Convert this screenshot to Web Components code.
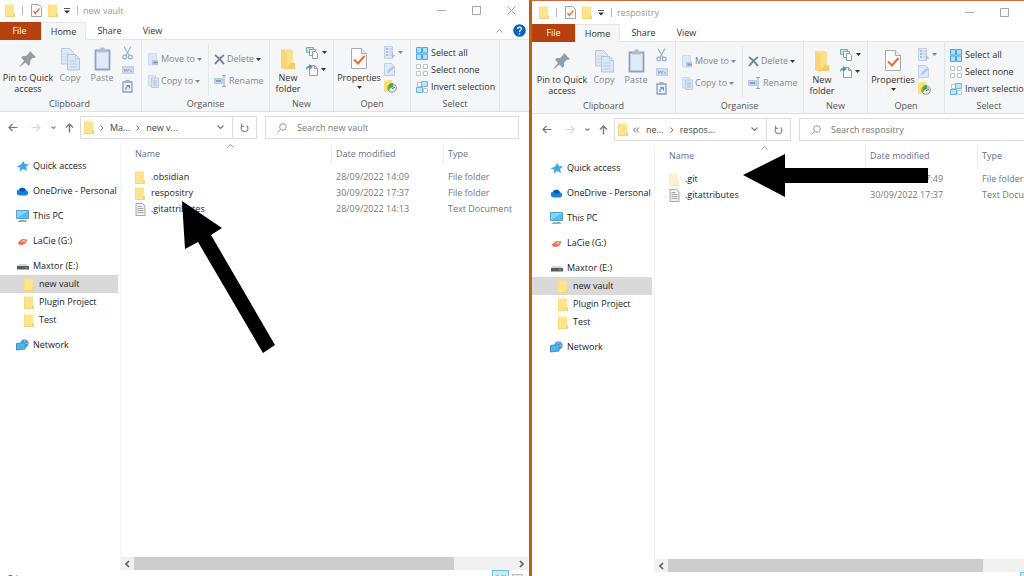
<!DOCTYPE html>
<html lang="en">
<head>
<meta charset="utf-8">
<title>File Explorer</title>
<style>
  html, body { margin: 0; height: 100%; }
  body { overflow: hidden; background: #fff; font: 9px/12px "Open Sans", "Noto Sans", sans-serif; color: #222; }
</style>
</head>
<body>
<desk-top>
  <explorer-window class="first" caption="new vault" crumbs="Ma...|new v..." rows='[["folder",".obsidian","28/09/2022 14:09","File folder"],["folder","respositry","30/09/2022 17:37","File folder"],["doc",".gitattributes","28/09/2022 14:13","Text Document"]]'></explorer-window>
  <explorer-window class="second" caption="respositry" crumbs="ne...|respos..." nested rows='[["faded",".git","30/09/2022 17:49","File folder"],["doc",".gitattributes","30/09/2022 17:37","Text Document"]]'></explorer-window>
</desk-top>
<script>
const folderArt = (a, b, c) => `<path d="M0 .5h9v8.500l1 1V13H0z" fill="${a}"/><path d="M0 .5h1V13H0z" fill="${b}"/><path d="M8 9h1l1 1v3H0v-1h8z" fill="${c}"/>`;
const ICONS = {
  folder: [10, 13, folderArt('#ffe490', '#fbdc7c', '#f5d571')],
  faded: [10, 13, folderArt('#fff1cb', '#feedbf', '#fbe9b8')],
  bigfolder: [16, 22, '<path d="M1 1h11l1 2v14l2 2v2H1z" fill="#fde08c"/><path d="M1 1l6 4v17l-6-2z" fill="#fbd677"/><path d="M11 15h4v6H7v-2z" fill="#f3cd69"/>'],
  doc: [11, 13, '<path d="M1 .5h6.500L10 3v9.500H1z" fill="#f2f2f2" stroke="#a8a8a8"/><path d="M2.500 3.500h4M2.500 5.500h6M2.500 7.500h6M2.500 9.500h6" stroke="#a5a5a5"/>'],
  check: [11, 13, '<path d="M.5.5h7L10.500 3.500v9H.5z" fill="#fff" stroke="#a2a2a2"/><path d="M2.500 7l2 2.500 4-5" fill="none" stroke="#ec7448" stroke-width="1.500"/>'],
  props: [18, 23, '<path d="M1.500 1.500h10l5 5v15h-15z" fill="#fff" stroke="#aaa"/><path d="M11.500 1.500v5h5" fill="#eee" stroke="#aaa"/><path d="M4 12.500l4 4 6.500-7.500" fill="none" stroke="#f0692c" stroke-width="2.200"/>'],
  pin: [18, 18, '<path d="M11 1l6 6-2 1-1-.3-3 3 .3 3L9.500 16 6.500 12.500 1 17l-.5-.5L5 11 2 7.500l2-1.500h3l3-3z" fill="#939da3"/>'],
  copy: [20, 24, '<path d="M1.500 1.500h8l4 4V17h-12z" fill="#dfe8f5" stroke="#b9c8e1"/><path d="M3 7h6M3 10h6M3 13h6" stroke="#c4d3ea"/><path d="M7.500 7.500h8l4 4V23h-12z" fill="#dce7f6" stroke="#b1c3df"/><path d="M15.500 7.500v4h4M9.500 14h7M9.500 17h7M9.500 20h7" fill="none" stroke="#b7c9e5"/>'],
  paste: [17, 24, '<path d="M1.500 3.500h14v19h-14z" fill="#e0ebfa" stroke="#8fa2c3" stroke-width="1.800"/><path d="M4 2.500h2.500v-2h4v2H13v3H4z" fill="#afbdd4"/>'],
  cut: [11, 14, '<path d="M2 .5l5 9M9 .5l-5 9" stroke="#a9b5c8" stroke-width="1.200"/><circle cx="2.700" cy="11" r="1.900" fill="none" stroke="#96abcd" stroke-width="1.200"/><circle cx="8.300" cy="11" r="1.900" fill="none" stroke="#96abcd" stroke-width="1.200"/>'],
  path: [12, 8, '<rect x=".5" y=".5" width="11" height="7" fill="#ccdaf0" stroke="#c2d1e8"/><path d="M2 3l1 2.500L4.500 3l1 2.500L7 3M8 5h2" stroke="#8aa2c8" fill="none"/>'],
  shortcut: [11, 13, '<path d="M1 2h9v10H1z" fill="#e6eefa" stroke="#8a9fc3" stroke-width="1.300"/><path d="M3.500 0h4v2.500h-4z" fill="#9dafcc"/><path d="M4 10V7.500L7 6M4.500 5.500H7.500V8.500" stroke="#6681b4" fill="none"/>'],
  move: [11, 13, '<path d="M.5.5h8V12h-8z" fill="#dfe8f6" stroke="#d0dcee"/><path d="M4 7h6v5H4z" fill="#b4c6e4"/><path d="M10 9.500H6M7.500 8L6 9.500 7.500 11" stroke="#7f99c8" fill="none"/>'],
  copyto: [11, 13, '<path d="M.5.5h7V11h-7z" fill="#dfe8f6" stroke="#cdd9ed"/><path d="M3.500 3h7v9.500h-7z" fill="#d9e4f5" stroke="#bccbe4"/><path d="M5 6h4M5 8h4M5 10h4" stroke="#abc0e1"/>'],
  del: [11, 11, '<path d="M1 1c3 2 6 5 9 9M10 1C7 3 4 6 1 10" stroke="#70849f" stroke-width="2" fill="none"/>'],
  rename: [13, 12, '<path d="M.5 3.500h8v5h-8z" fill="#c3d3ec" stroke="#b5c8e5"/><path d="M2 6h5" stroke="#86a0c9" stroke-width="2"/><path d="M8 .5h4M10 .5v11M8 11.500h4" stroke="#93a7c8"/>'],
  newitem: [13, 13, '<path d="M.5 1.500h7v5h-7z" fill="#bfe4ea" stroke="#7aacb9"/><path d="M3.500 3.500h6v6h-6z" fill="#f4f6f8" stroke="#8f9ca3"/><path d="M6.500 5.500h3l2 2v5h-5z" fill="#fff" stroke="#929ca3"/>'],
  easy: [12, 13, '<path d="M3.500 2.500h5l3 3v7h-8z" fill="#fff" stroke="#989c9f"/><path d="M8.500 2.500v3h3" fill="none" stroke="#989c9f"/><path d="M0 7c0-3 1-4 3-4V1l4 3-4 3V5C2 5 1 5.500 0 7z" fill="#459bc5"/>'],
  open: [11, 13, '<path d="M.5.5h8v12h-8z" fill="#e0e9f6" stroke="#c2cfe4"/><path d="M2 3h2M2 6h2M2 9h2" stroke="#98aed6" stroke-width="1.500"/><path d="M5 3h3M5 6h3M5 9h3" stroke="#b6c6e1"/><path d="M8 7l3 3-3 2z" fill="#a2bbe0"/>'],
  edit: [11, 13, '<path d="M.5.5h7l3 3v9H.5z" fill="#dde8f8" stroke="#c0cfe6"/><path d="M3 10l1-3 5-4 1.500 1.500L5 9.500z" fill="#b0c6e6"/>'],
  history: [13, 13, '<path d="M0 1l5-1h3v12H0z" fill="#ffe070"/><circle cx="8" cy="8" r="4.300" fill="#e8ebe9" stroke="#8b9890"/><path d="M9 3.500C6 2.500 3.500 5 4.500 11l2-3 3-1z" fill="#43ad48"/><path d="M8 9l3-2" stroke="#66706a"/>'],
  all: [12, 13, '<path d="M.5.5h5v5.500h-5zM6.500.5h5v5.500h-5zM.5 7h5v5.500h-5zM6.500 7h5v5.500h-5z" fill="#b2e0fb" stroke="#48a7e4"/>'],
  none: [12, 12, '<path d="M.5.5h4v4h-4zM7.500.5h4v4h-4zM.5 7.500h4v4h-4zM7.500 7.500h4v4h-4z" fill="#fff" stroke="#c0c2c4"/>'],
  invert: [12, 12, '<path d="M1.500 1.500h4v4h-4zM7.500 7.500h4v4h-4z" fill="#fff" stroke="#c0c2c4"/><path d="M5.500.5h6v5h-6zM.5 6.500h6v5h-6z" fill="#bfe4fb" stroke="#66b6e8"/>'],
  down: [5, 3, '<path d="M0 0h5L2.500 3z" fill="currentColor"/>'],
  quick: [6, 6, '<path d="M0 .5h6" stroke="#555"/><path d="M0 2.500h6L3 5.500z" fill="#333"/>'],
  min: [9, 9, '<path d="M0 4.500h9" stroke="#aaa"/>'],
  max: [9, 9, '<path d="M.5.5h8v8h-8z" fill="none" stroke="#a6a6a6"/>'],
  close: [9, 9, '<path d="M.5.5l8 8M8.500.5l-8 8" stroke="#a0a0a0"/>'],
  up: [7, 4, '<path d="M.5 3.500l3-3 3 3" fill="none" stroke="#999"/>'],
  help: [13, 13, '<circle cx="6.500" cy="6.500" r="6.300" fill="#0b63b8"/><path d="M4.700 5c0-2.600 3.800-2.400 3.700-.1C8.400 6.400 6.500 6.300 6.500 8M6.500 9v1.500" stroke="#fff" stroke-width="1.300" fill="none"/>'],
  back: [10, 9, '<path d="M9.500 4.500H1M4.500 1L1 4.500 4.500 8" fill="none" stroke="#777" stroke-width="1.200"/>'],
  fwd: [10, 9, '<path d="M.5 4.500H9M5.500 1L9 4.500 5.500 8" fill="none" stroke="#d8d8d8" stroke-width="1.200"/>'],
  upward: [9, 10, '<path d="M4.500 9.500V1M1 4.500L4.500 1 8 4.500" fill="none" stroke="#777" stroke-width="1.400"/>'],
  chev: [7, 5, '<path d="M.5.5l3 3 3-3" fill="none" stroke="#777" stroke-width="1.200"/>'],
  recent: [5, 4, '<path d="M.5.5l2 2 2-2" fill="none" stroke="#888" stroke-width="1.200"/>'],
  sep: [4, 6, '<path d="M.5.5L3 3 .5 5.500" fill="none" stroke="#777"/>'],
  dsep: [7, 6, '<path d="M3 .5L.5 3 3 5.500M6 .5L3.500 3 6 5.500" fill="none" stroke="#666"/>'],
  refresh: [9, 10, '<path d="M2.300 2.800A3.400 3.400 0 1 0 6.500 2.600M1.500.8v2.500h2.500" fill="none" stroke="#888" stroke-width="1.200"/>'],
  lens: [10, 10, '<circle cx="6" cy="4" r="3.300" fill="none" stroke="#999"/><path d="M3.500 6.500L.5 9.500" stroke="#999"/>'],
  star: [13, 12, '<path d="M7.500 1L9 4.200l4-.2-3 3 1 4-3.700-2L3.500 11.500l.8-3.700L.5 6.500l4.200-1.800z" fill="#3ca8ea"/>'],
  cloud: [13, 9, '<path d="M3.500 8.500a3 3 0 0 1-.5-5.900A4 4 0 0 1 10 3.300a2.700 2.700 0 0 1 .3 5.200z" fill="#1681d8"/><path d="M3 2.600A4 4 0 0 1 10 3.300L6 5z" fill="#0a56ad"/>'],
  pc: [13, 12, '<path d="M.5.5h12v8H.5z" fill="#4fc0f3" stroke="#5f9fc2"/><path d="M1 1h11L1 8z" fill="#83d8fa"/><path d="M3 10.500h7M2 11.500h9" stroke="#8cb1c6"/>'],
  lacie: [13, 9, '<path d="M2 5.500l4-3.500 5.500.5L10 6 6.500 8 2.500 7.500z" fill="#e5744e"/><path d="M5 4.800l2-1.500 3 .5L8.500 5.300z" fill="#f9d3c2"/>'],
  drive: [13, 7, '<path d="M3 1h7l3 2.500H1z" fill="#d3d5d6"/><path d="M1 3h12v3.500H1z" fill="#565c5e"/><path d="M9 4.800h2" stroke="#47d368"/>'],
  net: [13, 12, '<circle cx="8.500" cy="4.500" r="4.200" fill="#5a9fc8"/><path d="M5 4.500h7M8.500.5v8" stroke="#8ac6e4"/><path d="M.5 4.500L9 3.500v6.500l-8.500 1z" fill="#47b8ef" stroke="#4795c2"/>'],
  left: [5, 8, '<path d="M4 1L1 4l3 3" fill="none" stroke="#606060" stroke-width="1.700"/>'],
  right: [5, 8, '<path d="M1 1l3 3-3 3" fill="none" stroke="#606060" stroke-width="1.700"/>'],
  details: [12, 9, '<path d="M1 2h3M6 2h5M1 4.500h3M6 4.500h5M1 7h3M6 7h5" stroke="#7e949e"/>'],
  thumbs: [11, 9, '<path d="M.5.5h10v8H.5z" fill="#dfe9f6" stroke="#b9bdc1"/><path d="M2 2.500h7v4H2z" fill="#6d9ade"/>']
};

class UiIcon extends HTMLElement {
  connectedCallback() {
    if (this.shadowRoot) return;
    const [w, h, art] = ICONS[this.getAttribute('name')];
    this.attachShadow({ mode: 'open' }).innerHTML =
      `<style>:host{display:block;flex:none;width:${w}px;height:${h}px}svg{display:block}</style>
       <svg width="${w}" height="${h}" viewBox="0 0 ${w} ${h}" aria-hidden="true">${art}</svg>`;
  }
}
customElements.define('ui-icon', UiIcon);
const icon = n => `<ui-icon name="${n}"></ui-icon>`;
const RESET = `:host,*{box-sizing:border-box}button{margin:0;padding:0;border:0;background:none;font:inherit;color:inherit;display:flex;align-items:center}`;

class DeskTop extends HTMLElement {
  constructor() {
    super();
    this.attachShadow({ mode: 'open' }).innerHTML = `<style>
      :host{display:grid;grid-template-columns:minmax(0,529fr) minmax(0,495fr);height:100vh;overflow:hidden;position:relative}
      ::slotted(explorer-window){min-width:0}
      ::slotted(.first){--pull:-1px 0 0 -2px}
      ::slotted(.second){--pull:0;--inner-min:525px;border-left:3px solid #bd620f;border-top:1px solid #cb6b42}
    </style><slot></slot>
    <pointer-arrow points="182,201 222,228 211,235 275,345 263,353 198,242 185,249"></pointer-arrow>
    <pointer-arrow points="743,175 785,154 785,168 928,168 928,183 785,183 785,197"></pointer-arrow>`;
  }
}

class PointerArrow extends HTMLElement {
  connectedCallback() {
    if (this.shadowRoot) return;
    this.attachShadow({ mode: 'open' }).innerHTML = `<style>:host{position:absolute;inset:0;pointer-events:none}svg{display:block;overflow:visible}</style>
      <svg width="1" height="1" aria-hidden="true"><polygon points="${this.getAttribute('points')}"/></svg>`;
  }
}
customElements.define('pointer-arrow', PointerArrow);

class TitleBar extends HTMLElement {
  connectedCallback() {
    if (this.shadowRoot) return;
    this.attachShadow({ mode: 'open' }).innerHTML = `<style>${RESET}
      :host{display:flex;align-items:center;height:23px;padding-left:7px;color:#999}
      i{width:1px;height:9px;background:#bbb;margin:0 8px 0 7px}
      i+h1{margin-left:-3px}
      .b{margin-right:6px}
      h1{font:inherit;margin:0;flex:1}
      .w{width:35px;height:22px;justify-content:center}
    </style>${icon('folder')}<i></i><button class="b" aria-label="Properties">${icon('check')}</button>
    <button class="b" aria-label="New folder">${icon('folder')}</button><button aria-label="Customise toolbar">${icon('quick')}</button><i></i>
    <h1>${this.getAttribute('caption')}</h1>
    <button class="w" aria-label="Minimise">${icon('min')}</button><button class="w" aria-label="Maximise">${icon('max')}</button><button class="w" aria-label="Close">${icon('close')}</button>`;
  }
}
customElements.define('title-bar', TitleBar);

class RibbonTabs extends HTMLElement {
  constructor() {
    super();
    this.attachShadow({ mode: 'open' }).innerHTML = `<style>${RESET}
      :host{display:flex;height:18px;color:#333;border-bottom:1px solid #e4e5e6}
      button{height:18px;width:43px;justify-content:center}
      .file{background:#b7410e;color:#fff}
      .home{width:45px;margin-right:2px;background:#f5f6f7;border:1px solid #e4e5e6;border-bottom:0}
      .end{margin-left:auto;display:flex;align-items:center;gap:10px;padding-right:3px}
      .end button{width:auto}
    </style><button class="file">File</button><button class="home">Home</button><button>Share</button><button>View</button>
    <div class="end"><button aria-label="Collapse ribbon">${icon('up')}</button><button aria-label="Help">${icon('help')}</button></div>`;
  }
}
customElements.define('ribbon-tabs', RibbonTabs);

class RibbonGroup extends HTMLElement {
  connectedCallback() {
    if (this.shadowRoot) return;
    this.attachShadow({ mode: 'open' }).innerHTML = `<style>
      :host{display:flex;flex-direction:column;flex:none;box-sizing:border-box;border-right:1px solid #e3e5e7;height:71px}
      .body{display:flex;height:58px}
      .name{text-align:center;color:#555}
    </style><div class="body"><slot></slot></div><div class="name">${this.getAttribute('label')}</div>`;
  }
}
customElements.define('ribbon-group', RibbonGroup);

class RibbonBar extends HTMLElement {
  constructor() {
    super();
    this.attachShadow({ mode: 'open' }).innerHTML = `<style>${RESET}
      :host{display:flex;height:72px;background:#f5f6f7;border-bottom:1px solid #dfe0e1;color:#333;overflow:hidden}
      .clip{width:144px}.org{width:128px}.new{width:64px}.opn{width:77px}.sel{width:89px}
      .big{flex-direction:column;justify-content:flex-start;padding-top:5px;text-align:center}
      .big .art{height:27px;display:flex;align-items:center;justify-content:center}
      .big .txt{display:flex;flex-direction:column;line-height:11px}
      .big ui-icon[name=down]{margin-top:3px}
      .off{color:#858789}
      .stack{display:flex;flex-direction:column;align-items:flex-start}
      .clip .stack{padding-top:6px;gap:6px}
      .two{width:66px;padding:13px 0 0 6px;gap:10px}
      .two button,.sel button{gap:3px;height:12px;white-space:nowrap}
      .two button{gap:2px}
      .tiny ui-icon[name=down]{margin-left:1px}
      .two+.two{border-left:1px solid #e6e7e9;width:61px;height:52px;margin-top:4px;padding:9px 0 0 5px}
      .tiny{padding-top:6px;gap:4px}.tiny button{gap:2px}
      .sel .stack{padding:7px 0 0 5px;gap:5px}
      .pin{width:60px}.cp{width:24px}.ps{width:40px}.dark{color:#333}.nf{width:36px}.pr{width:50px}
    </style>
    <ribbon-group class="clip" label="Clipboard">
      <button class="big pin"><span class="art">${icon('pin')}</span><span class="txt"><span>Pin to Quick</span><span>access</span></span></button>
      <button class="big off cp"><span class="art">${icon('copy')}</span><span class="txt">Copy</span></button>
      <button class="big off ps"><span class="art">${icon('paste')}</span><span class="txt">Paste</span></button>
      <div class="stack"><button aria-label="Cut">${icon('cut')}</button><button aria-label="Copy path">${icon('path')}</button><button aria-label="Paste shortcut">${icon('shortcut')}</button></div>
    </ribbon-group>
    <ribbon-group class="org" label="Organise">
      <div class="stack two off"><button>${icon('move')}Move to${icon('down')}</button><button>${icon('copyto')}Copy to${icon('down')}</button></div>
      <div class="stack two off"><button>${icon('del')}Delete<ui-icon name="down" class="dark"></ui-icon></button><button>${icon('rename')}Rename</button></div>
    </ribbon-group>
    <ribbon-group class="new" label="New">
      <button class="big nf"><span class="art">${icon('bigfolder')}</span><span class="txt"><span>New</span><span>folder</span></span></button>
      <div class="stack tiny"><button aria-label="New item">${icon('newitem')}${icon('down')}</button><button aria-label="Easy access">${icon('easy')}${icon('down')}</button></div>
    </ribbon-group>
    <ribbon-group class="opn" label="Open">
      <button class="big pr"><span class="art">${icon('props')}</span><span class="txt">Properties</span>${icon('down')}</button>
      <div class="stack tiny off"><button aria-label="Open">${icon('open')}${icon('down')}</button><button aria-label="Edit">${icon('edit')}</button><button aria-label="History">${icon('history')}</button></div>
    </ribbon-group>
    <ribbon-group class="sel" label="Select">
      <div class="stack"><button>${icon('all')}Select all</button><button>${icon('none')}Select none</button><button>${icon('invert')}Invert selection</button></div>
    </ribbon-group>`;
  }
}
customElements.define('ribbon-bar', RibbonBar);

class AddressRow extends HTMLElement {
  connectedCallback() {
    if (this.shadowRoot) return;
    const [a, b] = this.getAttribute('crumbs').split('|');
    const nested = this.hasAttribute('nested');
    this.attachShadow({ mode: 'open' }).innerHTML = `<style>${RESET}
      :host{display:flex;align-items:center;height:31px;padding:0 10px;color:#444}
      .nav{display:flex;align-items:center;width:72px}
      .nav button{margin-right:13px}.nav button:nth-child(2){margin-right:10px}.nav button:nth-child(3){margin-right:9px}.nav button:nth-child(4){margin:0}
      .addr{display:flex;align-items:center;width:177px;height:23px;border:1px solid #dcdcdc;padding-left:3px}
      .addr ui-icon[name=folder]{margin-right:6px}
      .addr ui-icon[name=dsep]{margin-left:-1px}
      .crumb{margin-left:6px}.last{margin:0 auto 0 6px}.crumb+ui-icon{margin-left:6px}
      .drop{width:23px;height:21px;justify-content:center}
      .addr .ref{width:24px;height:21px;justify-content:center;border-left:1px solid #dcdcdc}
      .search{flex:1;display:flex;align-items:center;height:23px;border:1px solid #dcdcdc;margin-left:8px;padding-left:11px;gap:10px}
      input{flex:1;min-width:0;border:0;outline:0;padding:0;background:none;font:inherit;color:#777}
      input::placeholder{color:#777;opacity:1}
    </style>
    <div class="nav"><button aria-label="Back">${icon('back')}</button><button aria-label="Forward">${icon('fwd')}</button><button aria-label="Recent">${icon('recent')}</button><button aria-label="Up">${icon('upward')}</button></div>
    <div class="addr">${icon('folder')}${icon(nested ? 'dsep' : 'sep')}<button class="crumb">${a}</button>${icon('sep')}<button class="last">${b}</button>
    <button class="drop" aria-label="Previous locations">${icon('chev')}</button><button class="ref" aria-label="Refresh">${icon('refresh')}</button></div>
    <label class="search">${icon('lens')}<input type="search" aria-label="Search" placeholder="Search ${this.getAttribute('caption')}"></label>`;
  }
}
customElements.define('address-row', AddressRow);

class NavTree extends HTMLElement {
  constructor() {
    super();
    const items = [['star', 'Quick access'], ['cloud', 'OneDrive - Personal'], ['pc', 'This PC'], ['lacie', 'LaCie (G:)'], ['drive', 'Maxtor (E:)', 'parent'],
      ['folder', 'new vault', 'child current'], ['folder', 'Plugin Project', 'child'], ['folder', 'Test', 'child lastchild'], ['net', 'Network']];
    this.attachShadow({ mode: 'open' }).innerHTML = `<style>
      :host{display:block;width:123px;flex:none;box-sizing:border-box;border-right:1px solid #f4f4f4;padding:14px 2px 0 0}
      a{display:flex;align-items:center;gap:4px;height:18px;margin-bottom:7px;padding-left:18px;color:#222;text-decoration:none;white-space:nowrap}
      .parent,.child{margin-bottom:0}.lastchild{margin-bottom:7px}
      .child{padding-left:26px;gap:5px}.current{background:#d9d9d9}
    </style><nav>${items.map(([n, t, c = '']) => `<a href="#" class="${c}">${icon(n)}${t}</a>`).join('')}</nav>`;
  }
}
customElements.define('nav-tree', NavTree);

class FileTable extends HTMLElement {
  connectedCallback() {
    if (this.shadowRoot) return;
    const rows = JSON.parse(this.getAttribute('rows'));
    this.attachShadow({ mode: 'open' }).innerHTML = `<style>
      :host{display:block;flex:1;position:relative;overflow:hidden}
      table{width:100%;border-collapse:collapse;table-layout:fixed}
      .n{width:210px}.d{width:112px}
      th,td{padding:0;text-align:left;font-weight:400;white-space:nowrap}
      th{padding:1px 0 5px;color:#63728f}
      th div{height:20px;line-height:20px;padding-left:4px;border-left:1px solid #ebebeb}
      th:first-child div{padding-left:13px;border-color:transparent}
      td{height:16px;padding-left:5px;color:#777}
      td:first-child{padding-left:14px;color:#222}
      td span{display:flex;align-items:center;gap:6px}
      td ui-icon[name=doc]{margin-right:-1px}
      .sort{position:absolute;left:106px;top:1px}
    </style><ui-icon class="sort" name="up"></ui-icon>
    <table><colgroup><col class="n"><col class="d"><col></colgroup>
    <thead><tr><th><div>Name</div></th><th><div>Date modified</div></th><th><div>Type</div></th></tr></thead>
    <tbody>${rows.map(r => `<tr><td><span>${icon(r[0])}${r[1]}</span></td><td>${r[2]}</td><td>${r[3]}</td></tr>`).join('')}</tbody></table>`;
  }
}
customElements.define('file-table', FileTable);

class ScrollTrack extends HTMLElement {
  constructor() {
    super();
    this.attachShadow({ mode: 'open' }).innerHTML = `<style>${RESET}
      :host{display:flex;height:13px;background:#f0f0f0;margin-right:1px}
      button{width:13px;height:13px;justify-content:center}
      .thumb{flex:84;background:#cdcdcd}.rest{flex:16}
    </style><button aria-label="Scroll left">${icon('left')}</button><div class="thumb"></div><div class="rest"></div><button aria-label="Scroll right">${icon('right')}</button>`;
  }
}
customElements.define('scroll-track', ScrollTrack);

class StatusBar extends HTMLElement {
  connectedCallback() {
    if (this.shadowRoot) return;
    this.attachShadow({ mode: 'open' }).innerHTML = `<style>${RESET}
      :host{display:flex;height:19px;align-items:flex-start;padding:0 4px 0 10px;color:#345}
      span{flex:1;padding-top:3px}
      button{width:16px;height:17px;justify-content:center}
      .on{border:1px solid #70c0e4;background:#cdeaf7;width:17px}
    </style><span>${this.getAttribute('text')}</span><button class="on" aria-label="Details view">${icon('details')}</button><button aria-label="Large icons">${icon('thumbs')}</button>`;
  }
}
customElements.define('status-bar', StatusBar);

class ExplorerWindow extends HTMLElement {
  connectedCallback() {
    if (this.shadowRoot) return;
    const caption = this.getAttribute('caption'), rows = this.getAttribute('rows');
    this.attachShadow({ mode: 'open' }).innerHTML = `<style>
      :host{display:block;overflow:hidden;background:#fff}
      .frame{display:flex;flex-direction:column;min-width:var(--inner-min,0);height:calc(100vh + 14px);margin:var(--pull,0)}
      main{flex:1;display:flex;min-height:0}
      .pane{flex:1;display:flex;flex-direction:column;min-width:0}
    </style>
    <div class="frame"><title-bar caption="${caption}"></title-bar><ribbon-tabs></ribbon-tabs><ribbon-bar></ribbon-bar>
      <address-row caption="${caption}" crumbs="${this.getAttribute('crumbs')}" ${this.hasAttribute('nested') ? 'nested' : ''}></address-row>
      <main><nav-tree></nav-tree><div class="pane"><file-table rows='${rows}'></file-table><scroll-track></scroll-track></div></main>
      <status-bar text="${JSON.parse(rows).length} items"></status-bar></div>`;
  }
}
customElements.define('explorer-window', ExplorerWindow);
customElements.define('desk-top', DeskTop);
</script>
</body>
</html>
